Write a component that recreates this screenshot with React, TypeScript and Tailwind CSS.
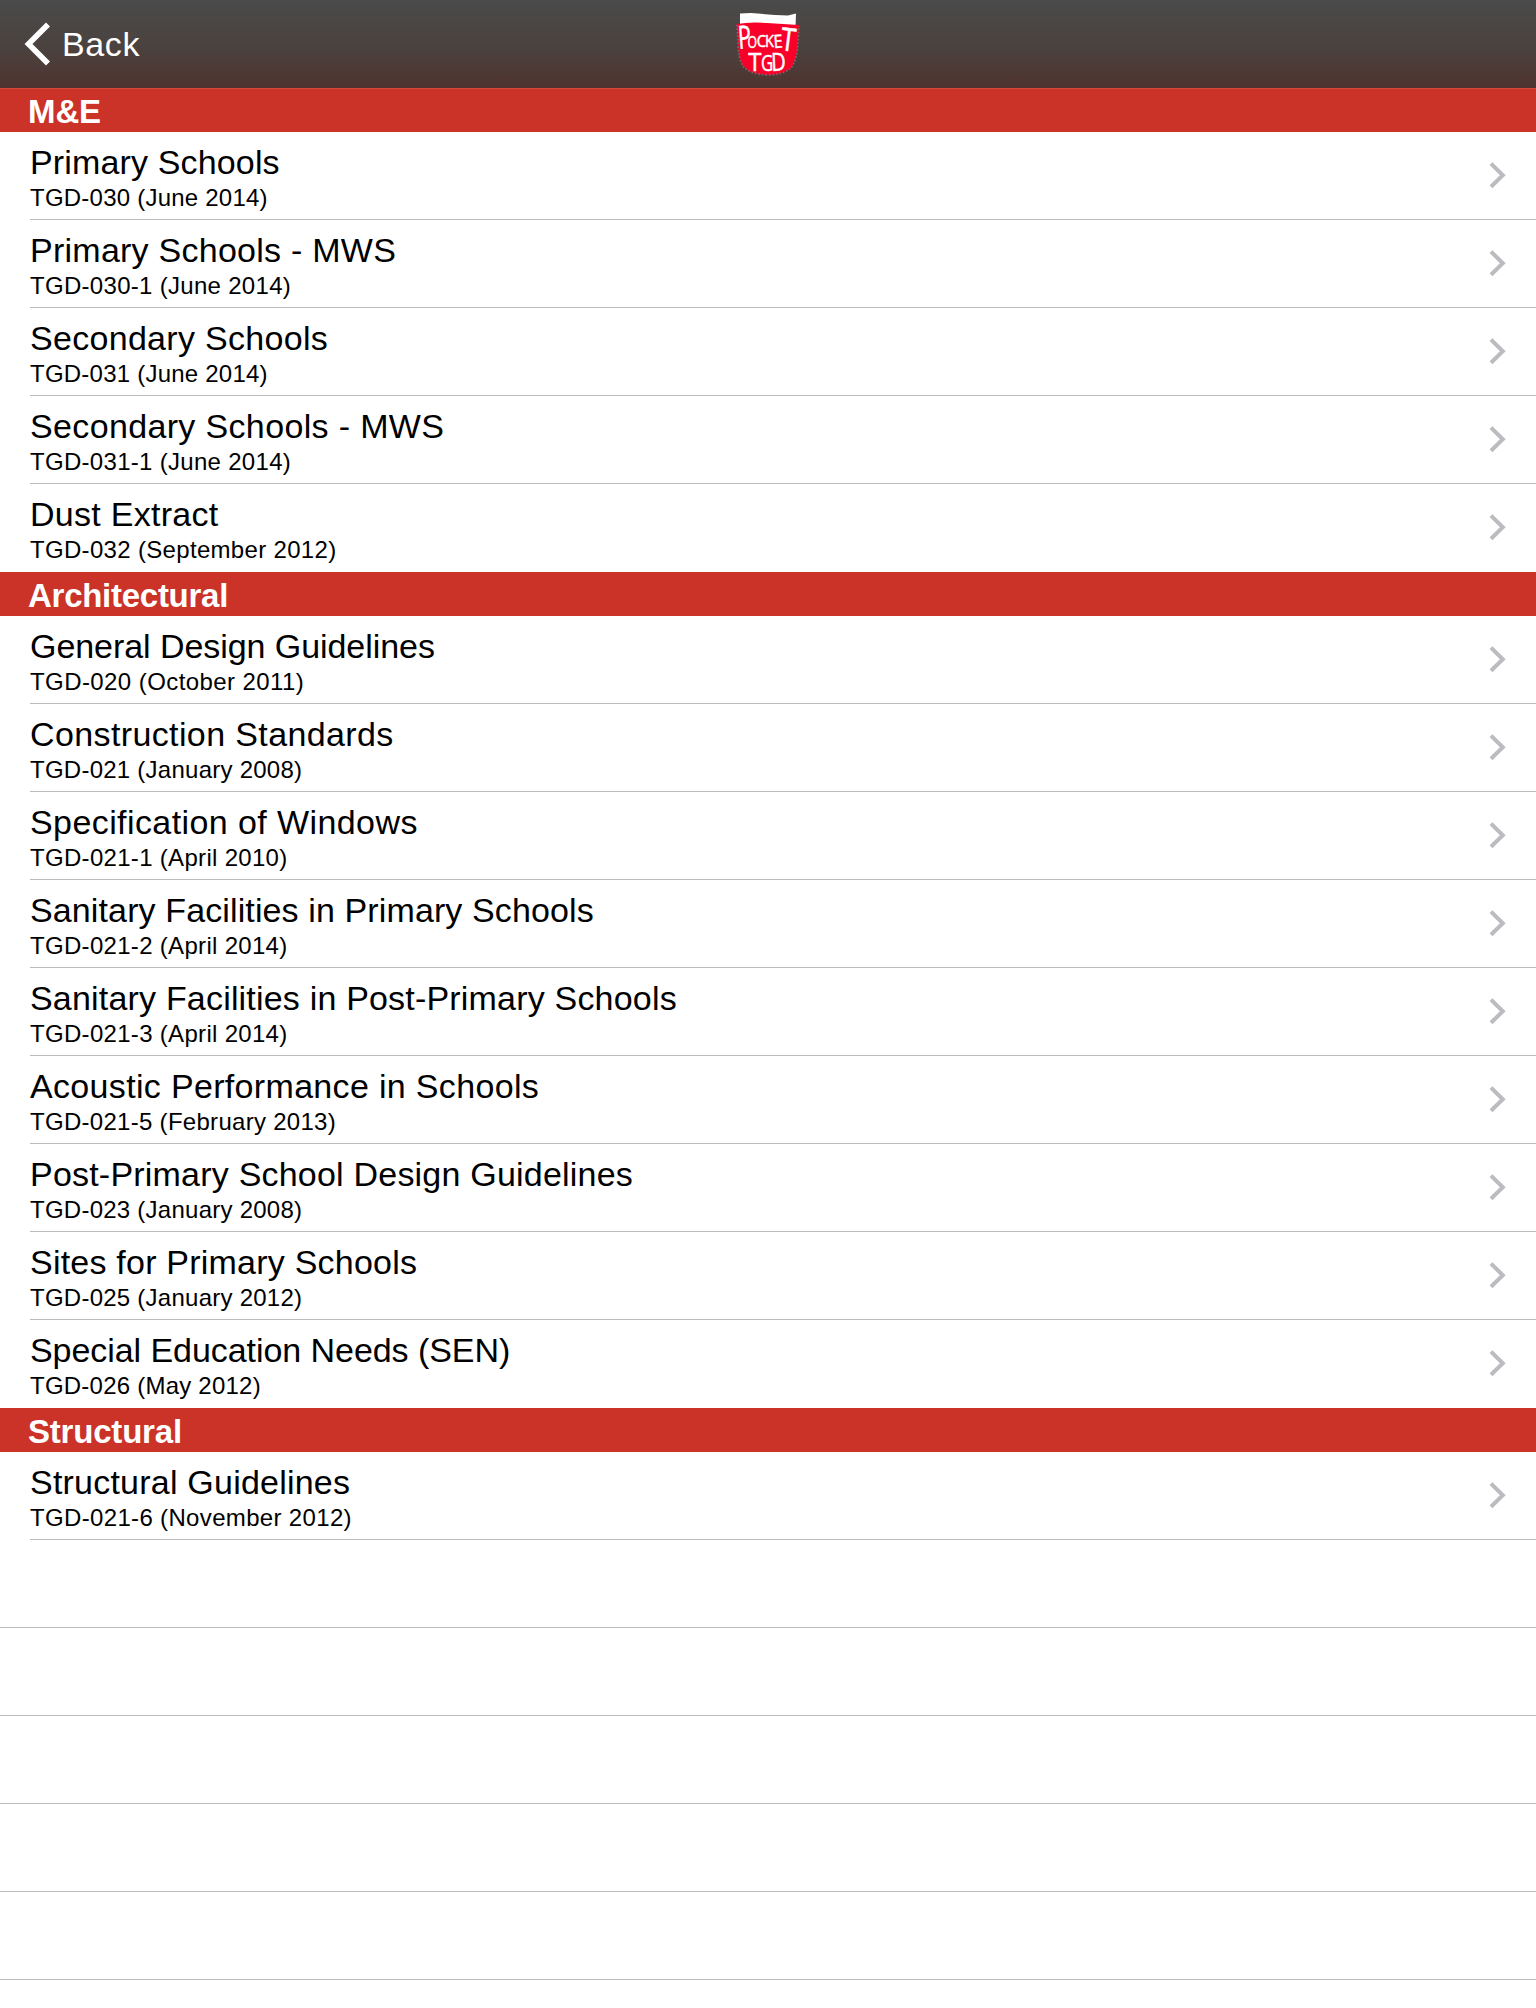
type Item = { title: string; detail: string; tt: string; dt: string };
type Section = { name: string; tracking: string; items: Item[] };

const sections: Section[] = [
  {
    name: "M&E",
    tracking: "tracking-[-0.1px]",
    items: [
      { title: "Primary Schools", detail: "TGD-030 (June 2014)", tt: "tracking-[0.15px]", dt: "tracking-[0.23px]" },
      { title: "Primary Schools - MWS", detail: "TGD-030-1 (June 2014)", tt: "tracking-[0.25px]", dt: "tracking-[0.3px]" },
      { title: "Secondary Schools", detail: "TGD-031 (June 2014)", tt: "tracking-[0.3px]", dt: "tracking-[0.23px]" },
      { title: "Secondary Schools - MWS", detail: "TGD-031-1 (June 2014)", tt: "tracking-[0.35px]", dt: "tracking-[0.3px]" },
      { title: "Dust Extract", detail: "TGD-032 (September 2012)", tt: "tracking-[0.27px]", dt: "tracking-[0.32px]" },
    ],
  },
  {
    name: "Architectural",
    tracking: "tracking-[-0.27px]",
    items: [
      { title: "General Design Guidelines", detail: "TGD-020 (October 2011)", tt: "tracking-[-0.06px]", dt: "tracking-[0.42px]" },
      { title: "Construction Standards", detail: "TGD-021 (January 2008)", tt: "tracking-[0.38px]", dt: "tracking-[0.25px]" },
      { title: "Specification of Windows", detail: "TGD-021-1 (April 2010)", tt: "tracking-[0.41px]", dt: "tracking-[0.31px]" },
      { title: "Sanitary Facilities in Primary Schools", detail: "TGD-021-2 (April 2014)", tt: "tracking-[0.12px]", dt: "tracking-[0.31px]" },
      { title: "Sanitary Facilities in Post-Primary Schools", detail: "TGD-021-3 (April 2014)", tt: "tracking-[0.19px]", dt: "tracking-[0.31px]" },
      { title: "Acoustic Performance in Schools", detail: "TGD-021-5 (February 2013)", tt: "tracking-[0.33px]", dt: "tracking-[0.29px]" },
      { title: "Post-Primary School Design Guidelines", detail: "TGD-023 (January 2008)", tt: "tracking-[0.21px]", dt: "tracking-[0.25px]" },
      { title: "Sites for Primary Schools", detail: "TGD-025 (January 2012)", tt: "tracking-[0.22px]", dt: "tracking-[0.25px]" },
      { title: "Special Education Needs (SEN)", detail: "TGD-026 (May 2012)", tt: "tracking-[-0.06px]", dt: "tracking-[0.23px]" },
    ],
  },
  {
    name: "Structural",
    tracking: "tracking-[-0.2px]",
    items: [{ title: "Structural Guidelines", detail: "TGD-021-6 (November 2012)", tt: "tracking-[0.22px]", dt: "tracking-[0.34px]" }],
  },
];

// Hand-lettered word mark: baseline origin, size, horizontal squeeze and tilt of each letter.
const letters = [
  { c: "P", x: 5.8, y: 40, s: 32, k: 0.68, r: -4 },
  { c: "O", x: 14.5, y: 38.5, s: 17, k: 0.72, r: 0 },
  { c: "C", x: 23.7, y: 38, s: 16.5, k: 0.9, r: 0 },
  { c: "K", x: 32, y: 38, s: 16.5, k: 0.88, r: 0 },
  { c: "E", x: 41, y: 39, s: 18, k: 0.9, r: -4 },
  { c: "T", x: 46.5, y: 41, s: 32, k: 0.84, r: 7 },
  { c: "T", x: 15.3, y: 62, s: 26, k: 0.92, r: 0 },
  { c: "G", x: 28, y: 62, s: 22, k: 0.76, r: 0 },
  { c: "D", x: 38.5, y: 62, s: 25, k: 0.8, r: -2 },
];

function Logo() {
  return (
    <svg width="70" height="70" viewBox="0 0 70 70" className="overflow-visible">
      <path d="M7 4.5 L18 4 L42 6 L55 6.5 L63 4.5 L62.5 18 L7 16 Z" fill="#fff" />
      <path
        d="M3.5 15 Q18 12.5 34 14 L66 16 L65 34 Q64 51 58 59 Q50 66 34 66 Q16 65 10 57 Q5 49 5 34 Z"
        fill="#f8002a"
      />
      <path
        d="M4 16 L5 34 Q5 49 10 57 Q16 65 34 66 Q50 66 58 59 Q64 51 65 34 L66 17"
        fill="none"
        stroke="#74696a"
        strokeWidth="1.8"
        strokeDasharray="1.5 2"
      />
      {letters.map((l, i) => (
        <text
          key={i}
          transform={`translate(${l.x} ${l.y}) rotate(${l.r}) scale(${l.k} 1)`}
          fontSize={l.s}
          fill="#fff"
          stroke="#fff"
          strokeWidth="0.5"
          strokeLinejoin="round"
          className="font-['Open_Sans',sans-serif]"
        >
          {l.c}
        </text>
      ))}
    </svg>
  );
}

function Row({ item, last }: { item: Item; last: boolean }) {
  return (
    <li className="h-[88px] pl-[30px]">
      <div className={`flex h-full items-center justify-between border-b pr-[30px] ${last ? "border-transparent" : "border-[#bcbcbc]"}`}>
        <div className="pt-[3px] whitespace-nowrap text-black">
          <p className={`text-[34px] leading-[40px] ${item.tt}`}>{item.title}</p>
          <p className={`pt-px text-[24px] leading-[30px] ${item.dt}`}>{item.detail}</p>
        </div>
        <svg width="18" height="28" viewBox="0 0 18 28" fill="none" stroke="#bbbbc0" strokeWidth="4">
          <path d="M3 1.6 L14.8 13.2 L3 24.8" />
        </svg>
      </div>
    </li>
  );
}

export default function App() {
  return (
    <main className="h-[2008px] w-[1536px] overflow-hidden bg-white font-['Liberation_Sans',Arial,sans-serif]">
      <header className="grid h-[88px] grid-cols-3 items-center bg-linear-to-b from-[#4a4a4a] via-[#4a4340] to-[#4e332f]">
        <div className="flex items-center gap-[11px] pl-[24px] text-white">
          <svg width="27" height="44" viewBox="0 0 27 44" fill="none" stroke="#fff" strokeWidth="5.6">
            <path d="M24 2.5 L4.5 22 L24 41.5" />
          </svg>
          <span className="text-[34px] leading-[40px] tracking-[0.6px]">Back</span>
        </div>
        <div className="flex justify-center">
          <Logo />
        </div>
      </header>
      {sections.map((s, si) => (
        <section key={s.name}>
          <h2
            className={`flex h-[44px] items-center border-t bg-[#cb3328] pt-[3px] pl-[28px] text-[33px] font-bold text-white ${s.tracking} ${si === 0 ? "border-[#d14a3c]" : "border-[#cb3328]"}`}
          >
            {s.name}
          </h2>
          <ul>
            {s.items.map((item, i) => (
              <Row key={item.title} item={item} last={i === s.items.length - 1 && si < sections.length - 1} />
            ))}
          </ul>
        </section>
      ))}
      {[0, 1, 2, 3, 4].map((n) => (
        <div key={n} className="h-[88px] border-b border-[#bcbcbc]" />
      ))}
    </main>
  );
}
